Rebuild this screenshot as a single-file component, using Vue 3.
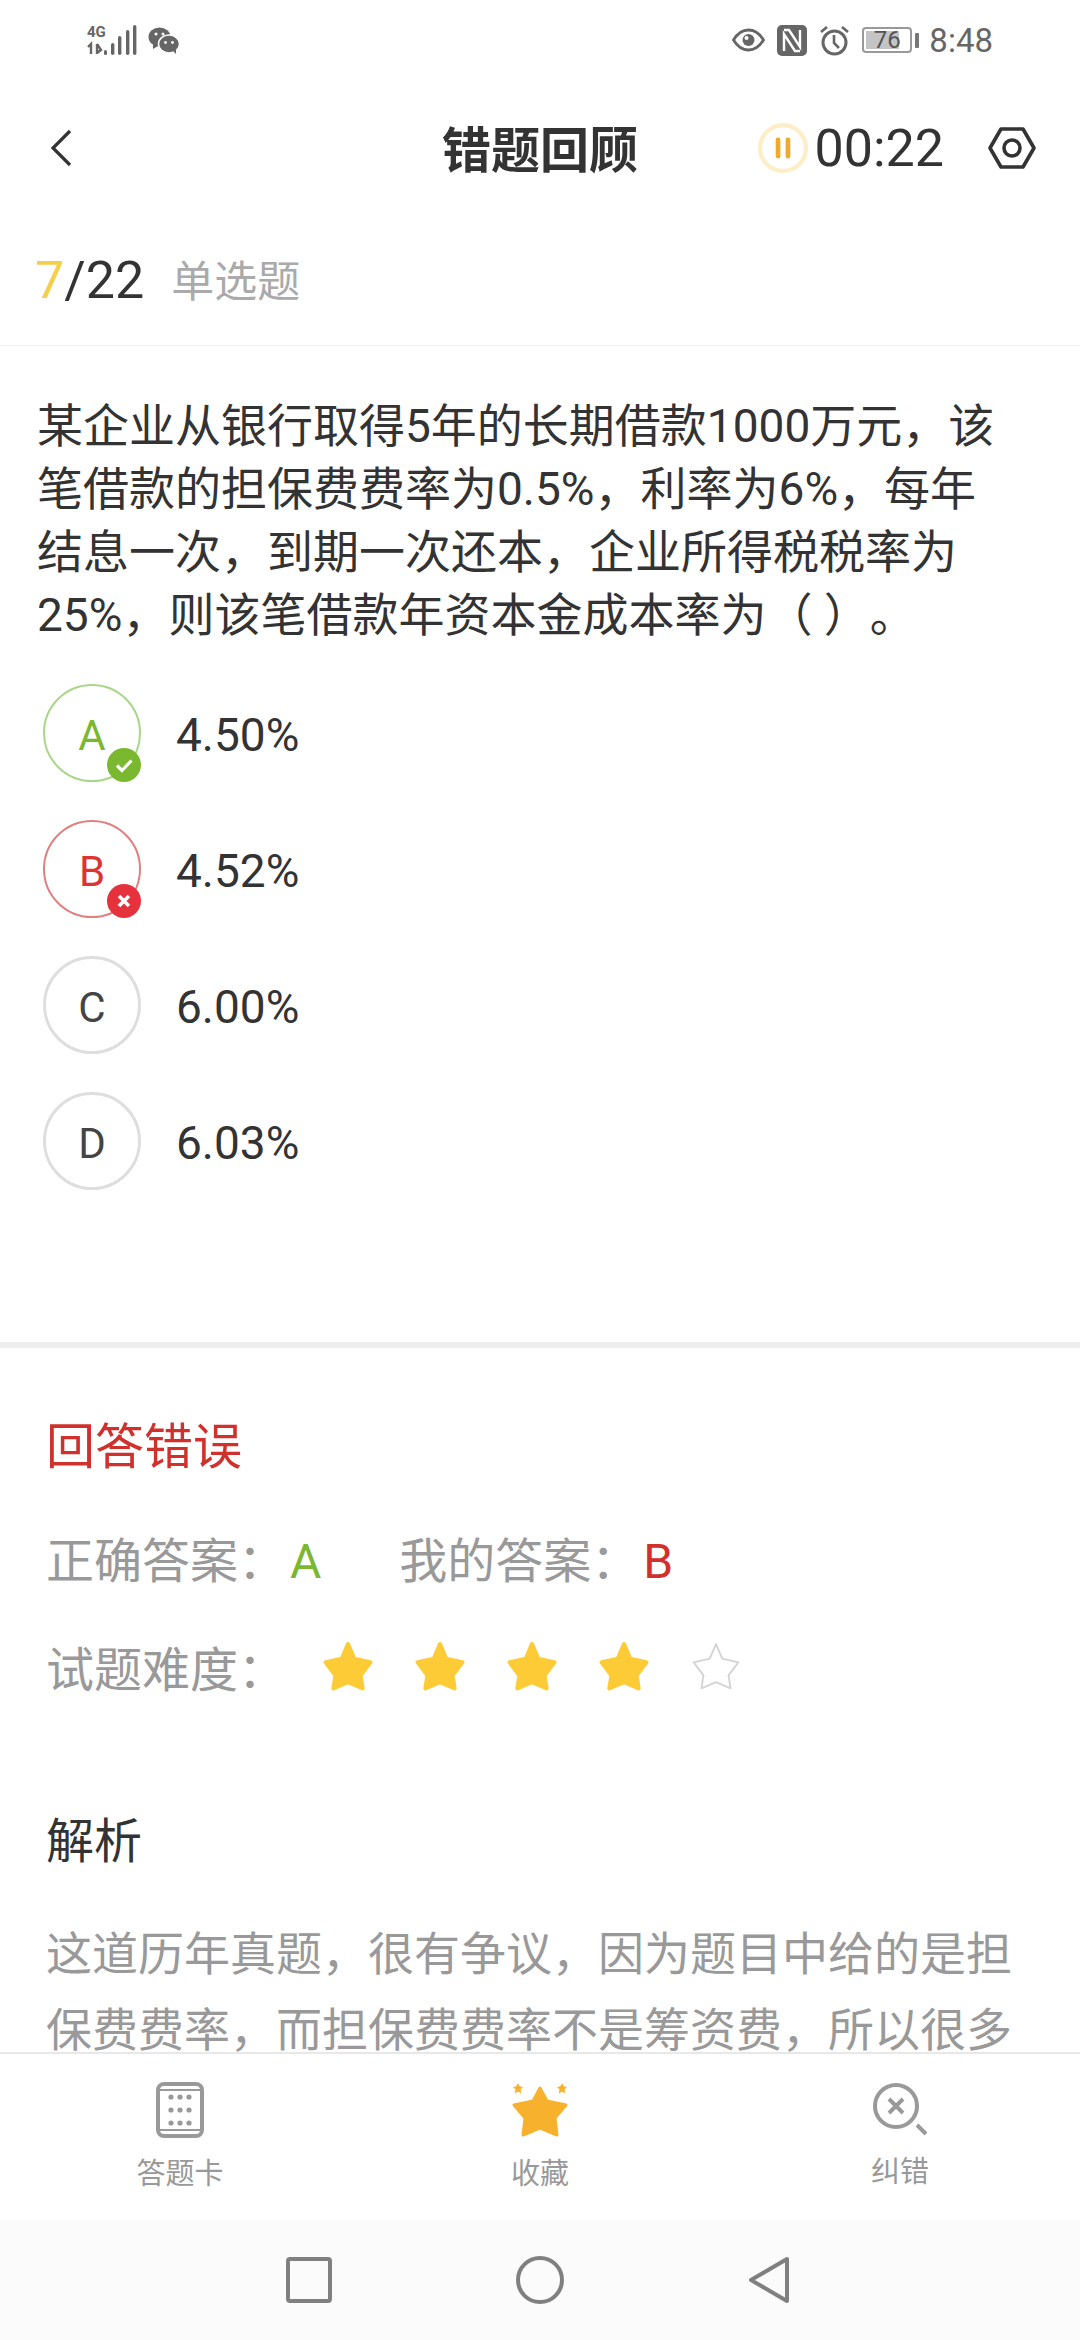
<script setup>
const options = [
  { key: 'A', text: '4.50%', state: 'right' },
  { key: 'B', text: '4.52%', state: 'wrong' },
  { key: 'C', text: '6.00%', state: '' },
  { key: 'D', text: '6.03%', state: '' }
]
const stars = [true, true, true, true, false]
const starPath = 'M24 3 L30 17 L45.500 20.500 L36 33 L38 45.500 L24 39.500 L10 45.500 L12 33 L2.500 20.500 L18 17 Z'
</script>

<template>
  <div class="page">
    <!-- 状态栏 -->
    <div class="status">
      <div class="status-left">
        <svg width="50" height="32" viewBox="0 0 50 32">
          <text x="0" y="13" class="net">4G</text>
          <path d="M4 30V20l-3 3M10 20v10M10 20l4 6-4 3" fill="none" stroke="#666" stroke-width="2.400" />
          <rect x="17" y="26" width="3" height="5" rx="1.500" fill="#666" />
          <rect x="24" y="19" width="3.400" height="12" rx="1.700" fill="#666" />
          <rect x="31" y="12" width="3.400" height="19" rx="1.700" fill="#666" />
          <rect x="39" y="6" width="3.400" height="25" rx="1.700" fill="#666" />
          <rect x="46" y="1" width="3.400" height="30" rx="1.700" fill="#666" />
        </svg>
        <svg width="31" height="27" viewBox="0 0 31 27">
          <ellipse cx="11.500" cy="10" rx="11" ry="9.500" fill="#666" />
          <path d="M5 17l0 5 5-3z" fill="#666" />
          <ellipse cx="21" cy="17" rx="10.500" ry="9" fill="#666" stroke="#fff" stroke-width="1.500" />
          <path d="M25 24l3 3 0-5z" fill="#666" />
          <circle cx="8" cy="7" r="1.500" fill="#fff" />
          <circle cx="15" cy="7" r="1.500" fill="#fff" />
          <circle cx="17.500" cy="15.500" r="1.400" fill="#fff" />
          <circle cx="24.500" cy="15.500" r="1.400" fill="#fff" />
        </svg>
      </div>
      <div class="status-right">
        <svg width="33" height="24" viewBox="0 0 33 24">
          <path d="M1.500 12C6 4.500 11 2 16.500 2S27 4.500 31.500 12C27 19.500 22 22 16.500 22S6 19.500 1.500 12Z" fill="none" stroke="#666" stroke-width="2.800" />
          <circle cx="16.500" cy="12" r="6" fill="#666" />
          <circle cx="14.500" cy="10" r="2" fill="#fff" />
        </svg>
        <svg width="30" height="31" viewBox="0 0 30 31">
          <rect width="30" height="31" rx="5" fill="#666" />
          <path d="M7 5h5l11 17v-17M23 26h-5L7 9v17" fill="none" stroke="#fff" stroke-width="2.400" />
        </svg>
        <svg width="31" height="31" viewBox="0 0 31 31">
          <circle cx="15.500" cy="17.500" r="11.500" fill="none" stroke="#666" stroke-width="3" />
          <path d="M15 10v8l5 5M2 7l6-5M29 7l-6-5" fill="none" stroke="#666" stroke-width="2.600" />
        </svg>
        <div class="battery">
          <div class="battery-fill"></div>
          <span>76</span>
        </div>
        <div class="battery-nub"></div>
        <span class="clock">8:48</span>
      </div>
    </div>

    <!-- 标题栏 -->
    <div class="header">
      <svg class="back" width="22" height="38" viewBox="0 0 22 38">
        <path d="M20 2L3 19l17 17" fill="none" stroke="#333" stroke-width="3.200" />
      </svg>
      <div class="title">错题回顾</div>
      <div class="header-right">
        <svg width="50" height="50" viewBox="0 0 48 48">
          <circle cx="24" cy="24" r="22" fill="#fff" stroke="#fdeec8" stroke-width="4" />
          <rect x="17" y="14" width="4.500" height="20" rx="2" fill="#efa92d" />
          <rect x="26.500" y="14" width="4.500" height="20" rx="2" fill="#efa92d" />
        </svg>
        <span class="timer">00:22</span>
        <svg class="gear" width="48" height="44" viewBox="0 0 48 44">
          <path d="M13 3h22l11 19-11 19H13L2 22Z" fill="none" stroke="#333" stroke-width="3.600" stroke-linejoin="round" />
          <circle cx="24" cy="22" r="8" fill="none" stroke="#333" stroke-width="3.600" />
        </svg>
      </div>
    </div>

    <div class="scroll">
      <div class="progress">
        <span class="num"><em>7</em>/22</span>
        <span class="type">单选题</span>
      </div>

      <div class="question">某企业从银行取得5年的长期借款1000万元，该笔借款的担保费费率为0.5%，利率为6%，每年结息一次，到期一次还本，企业所得税税率为25%，则该笔借款年资本金成本率为（ ）。</div>

      <div class="options">
        <div v-for="o in options" :key="o.key" class="option">
          <div class="circle" :class="o.state">
            {{ o.key }}
            <span v-if="o.state" class="mark">
              <svg width="34" height="34" viewBox="0 0 34 34">
                <path v-if="o.state === 'right'" d="M10 17.500l5 5 9.500-10" fill="none" stroke="#fff" stroke-width="3.200" />
                <path v-else d="M12 12l10 10M22 12L12 22" fill="none" stroke="#fff" stroke-width="3.600" />
              </svg>
            </span>
          </div>
          <span class="option-text">{{ o.text }}</span>
        </div>
      </div>

      <div class="result">
        <div class="result-title">回答错误</div>
        <div class="answers">
          <span>正确答案：<b class="green">A</b></span>
          <span class="mine">我的答案：<b class="red">B</b></span>
        </div>
        <div class="difficulty">
          <span>试题难度：</span>
          <div class="stars">
            <svg v-for="(on, i) in stars" :key="i" width="50" height="50" viewBox="0 0 48 48">
              <path :d="starPath" :fill="on ? '#fdcb36' : '#fff'" :stroke="on ? '#fdcb36' : '#d4d4d4'" :stroke-width="on ? 4 : 1.800" stroke-linejoin="round" />
            </svg>
          </div>
        </div>
        <div class="analysis-title">解析</div>
        <div class="analysis">这道历年真题，很有争议，因为题目中给的是担保费费率，而担保费费率不是筹资费，所以很多</div>
      </div>
    </div>

    <!-- 底部操作栏 -->
    <div class="tabs">
      <div class="tab">
        <svg width="48" height="56" viewBox="0 0 48 56">
          <rect x="2" y="2" width="44" height="52" rx="6" fill="none" stroke="#999" stroke-width="4" />
          <path d="M2 8h44M2 48h44" stroke="#999" stroke-width="2" />
          <g fill="#999">
            <circle cx="15" cy="15" r="2.600" /><circle cx="24" cy="15" r="2.600" /><circle cx="33" cy="15" r="2.600" />
            <circle cx="15" cy="28" r="2.600" /><circle cx="24" cy="28" r="2.600" /><circle cx="33" cy="28" r="2.600" />
            <circle cx="15" cy="41" r="2.600" /><circle cx="24" cy="41" r="2.600" /><circle cx="33" cy="41" r="2.600" />
          </g>
        </svg>
        <span>答题卡</span>
      </div>
      <div class="tab">
        <svg width="58" height="56" viewBox="0 0 58 56">
          <path d="M29 6l7 13 19 4-11 13 2 17-17-7-17 7 2-17L3 23l19-4Z" fill="#f7b12d" stroke="#f7b12d" stroke-width="3" stroke-linejoin="round" />
          <path d="M7 0l2 4 4 .5-3 3 1 5-4-2.500-4 2.500 1-5-3-3 4-.5ZM51 0l2 4 4 .5-3 3 1 5-4-2.500-4 2.500 1-5-3-3 4-.5Z" fill="#f7b12d" stroke="#fff" stroke-width="1" />
        </svg>
        <span>收藏</span>
      </div>
      <div class="tab">
        <svg width="56" height="54" viewBox="0 0 56 54">
          <circle cx="24" cy="24" r="21" fill="none" stroke="#999" stroke-width="4" />
          <path d="M17 17l14 14M31 17L17 31" fill="none" stroke="#999" stroke-width="4" />
          <path d="M45 43l9 9" stroke="#999" stroke-width="4" />
        </svg>
        <span>纠错</span>
      </div>
    </div>

    <!-- 系统导航 -->
    <div class="nav">
      <svg width="46" height="46" viewBox="0 0 46 46">
        <rect x="2" y="2" width="42" height="42" rx="2" fill="none" stroke="#808080" stroke-width="4" />
      </svg>
      <svg width="48" height="48" viewBox="0 0 48 48">
        <circle cx="24" cy="24" r="22" fill="none" stroke="#808080" stroke-width="4" />
      </svg>
      <svg width="42" height="48" viewBox="0 0 42 48">
        <path d="M39 3v42L3 24Z" fill="none" stroke="#808080" stroke-width="4" stroke-linejoin="round" />
      </svg>
    </div>
  </div>
</template>

<style scoped>
.page {
  width: 1080px;
  height: 2340px;
  background: #fff;
  display: flex;
  flex-direction: column;
  overflow: hidden;
  font-family: Roboto, "Noto Sans CJK SC", sans-serif;
  color: #333;
  text-spacing-trim: space-all;
}

.status {
  height: 80px;
  flex: none;
  display: flex;
  align-items: center;
  justify-content: space-between;
  padding: 0 87px;
  box-sizing: border-box;
}
.status-left,
.status-right {
  display: flex;
  align-items: center;
}
.status-left {
  gap: 11px;
}
.status-right {
  gap: 12px;
}
.net {
  font: bold 15px Roboto, sans-serif;
  fill: #666;
}
.battery {
  position: relative;
  width: 50px;
  height: 26px;
  border: 2px solid #999;
  border-radius: 4px;
  box-sizing: border-box;
  display: flex;
  align-items: center;
  justify-content: center;
  font-size: 24px;
  color: #555;
}
.battery span {
  position: relative;
}
.battery-fill {
  position: absolute;
  left: 2px;
  top: 2px;
  bottom: 2px;
  width: 33px;
  background: #c4c4c4;
}
.battery-nub {
  width: 4px;
  height: 15px;
  margin-left: -9px;
  background: #777;
  border-radius: 1px;
}
.clock {
  font-size: 33px;
  color: #666;
  margin-left: -2px;
}

.header {
  height: 136px;
  flex: none;
  display: grid;
  grid-template-columns: 1fr auto 1fr;
  align-items: center;
  padding: 0 44px 0 50px;
}
.title {
  font-size: 49px;
  font-weight: 700;
  color: #333;
  margin: 0 6px 4px 0;
}
.header-right {
  display: flex;
  align-items: center;
  justify-content: flex-end;
  gap: 7px;
}
.timer {
  font-size: 52px;
  color: #333;
}
.gear {
  margin-left: 37px;
}

.scroll {
  flex: 1;
  min-height: 0;
}
.progress {
  height: 129px;
  display: flex;
  align-items: center;
  padding-left: 35px;
  border-bottom: 1px solid #eee;
}
.num {
  font-size: 52px;
  color: #333;
}
.num em {
  font-style: normal;
  color: #f5cf4a;
}
.type {
  font-size: 43px;
  color: #aaa;
  margin: 0 0 5px 27px;
}
.question {
  padding: 49px 65px 0 37px;
  font-size: 46px;
  line-height: 63px;
  color: #333;
}
.options {
  margin-top: 37px;
  padding-left: 43px;
  display: flex;
  flex-direction: column;
  gap: 38px;
}
.option {
  display: flex;
  align-items: center;
}
.circle {
  position: relative;
  width: 98px;
  height: 98px;
  box-sizing: border-box;
  border: 3px solid #dedede;
  border-radius: 50%;
  padding-top: 4px;
  display: flex;
  align-items: center;
  justify-content: center;
  font-size: 42px;
  color: #444;
}
.circle.right {
  border: 2px solid #a9d689;
  color: #7ab82f;
}
.circle.wrong {
  border: 2px solid #e08080;
  color: #d33;
}
.mark {
  position: absolute;
  right: -2px;
  bottom: -2px;
  width: 34px;
  height: 34px;
  border-radius: 50%;
  display: flex;
}
.right .mark {
  background: #7ab82f;
}
.wrong .mark {
  background: #e6323c;
}
.option-text {
  margin-left: 35px;
  padding-top: 4px;
  font-size: 46px;
  color: #333;
}

.result {
  margin-top: 152px;
  border-top: 6px solid #eee;
  padding: 68px 46px 0;
}
.result-title {
  font-size: 49px;
  line-height: 64px;
  color: #d0312d;
}
.answers,
.difficulty {
  font-size: 48px;
  color: #999;
  display: flex;
  align-items: center;
}
.answers {
  margin-top: 45px;
  height: 64px;
}
.answers b {
  font-weight: 400;
  margin-left: 4px;
}
.green {
  color: #7ab82f;
}
.red {
  color: #d0312d;
}
.mine {
  margin-left: 78px;
}
.difficulty {
  margin-top: 45px;
  height: 64px;
}
.stars {
  display: flex;
  gap: 42px;
  margin-left: 37px;
}
.analysis-title {
  margin-top: 112px;
  font-size: 48px;
  line-height: 64px;
  color: #333;
}
.analysis {
  margin-top: 42px;
  font-size: 46px;
  line-height: 76px;
  color: #999;
}

.tabs {
  flex: none;
  height: 168px;
  box-sizing: border-box;
  border-top: 2px solid #e8e8e8;
  display: grid;
  grid-template-columns: 1fr 1fr 1fr;
  padding-top: 28px;
}
.tab {
  display: flex;
  flex-direction: column;
  align-items: center;
  font-size: 29px;
  color: #999;
}
.tab span {
  margin-top: 12px;
}
.nav {
  flex: none;
  height: 120px;
  background: #fbfbfb;
  display: flex;
  align-items: center;
  justify-content: center;
  gap: 184px;
  padding-right: 4px;
}
</style>
